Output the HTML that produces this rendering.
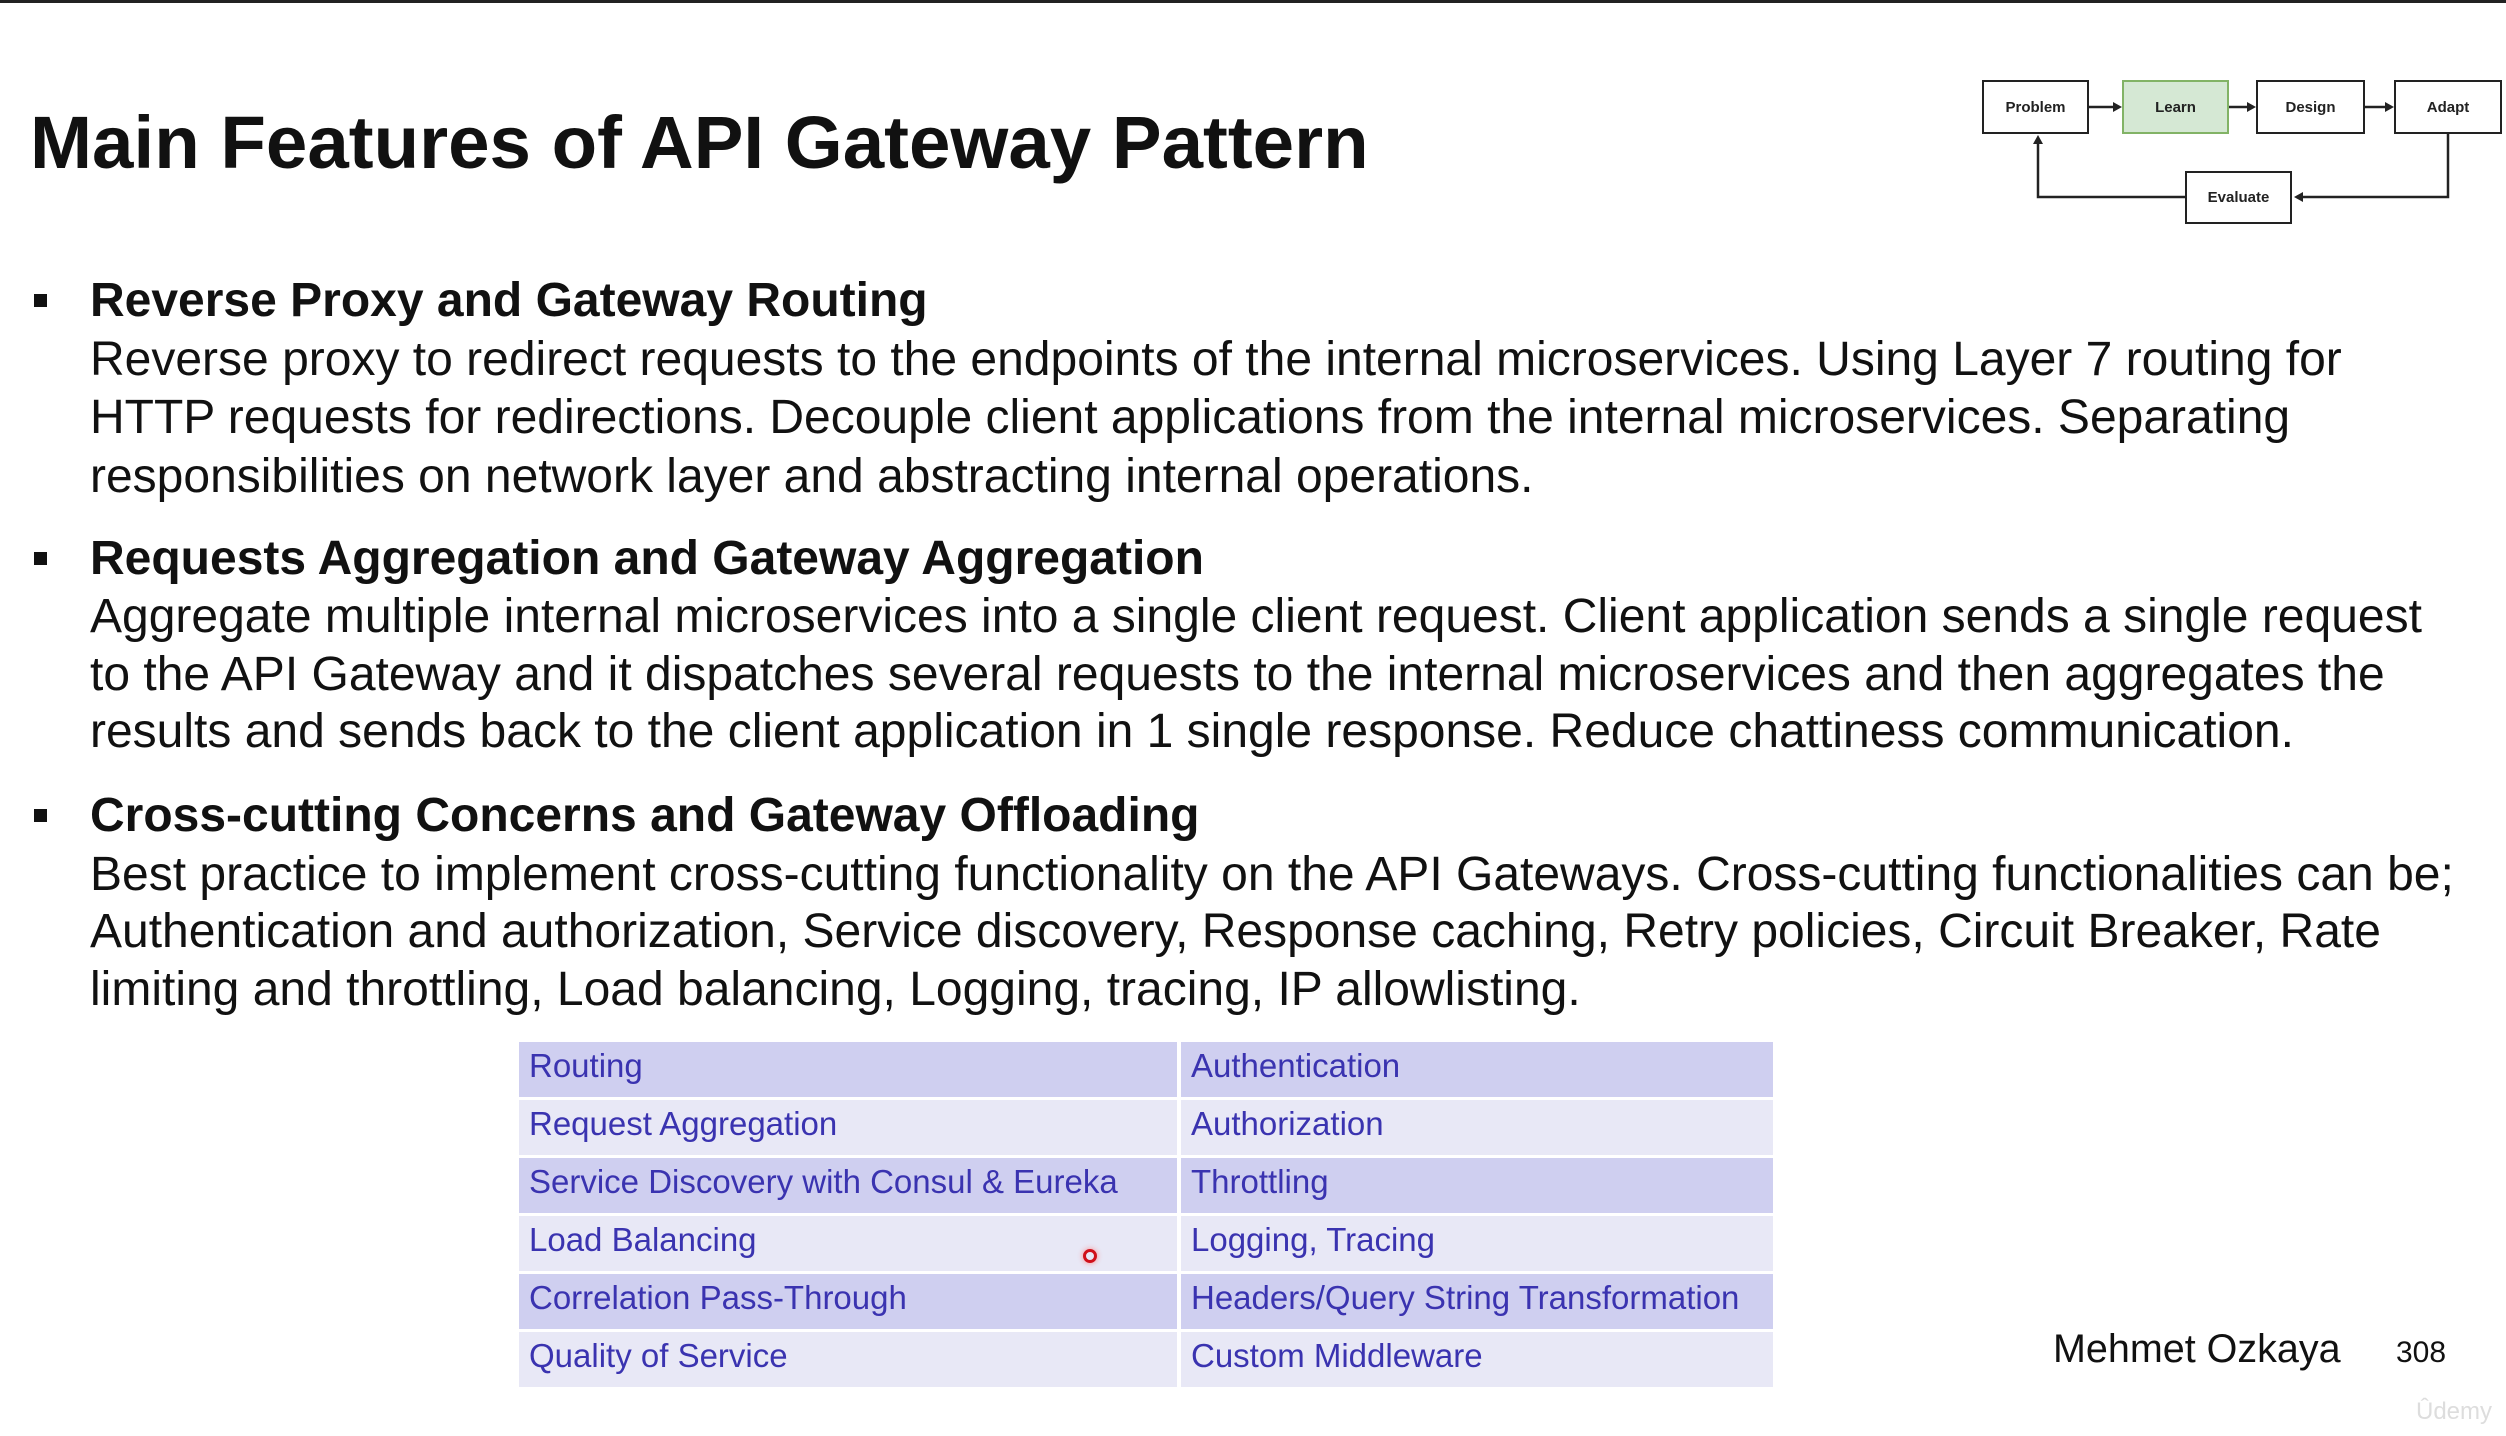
<!DOCTYPE html>
<html><head><meta charset="utf-8"><style>
*{margin:0;padding:0;box-sizing:border-box}
body{width:2506px;height:1436px;background:#fff;position:relative;overflow:hidden;font-family:"Liberation Sans",Arial,sans-serif;color:#111}
.a{position:absolute;white-space:nowrap}
.title{left:30px;top:106px;font-size:74.5px;font-weight:bold;line-height:1}
.h{left:90px;font-size:48px;font-weight:bold;line-height:1}
.t{left:90px;font-size:48px;line-height:1}
.b{left:34px;width:13px;height:13px;background:#111}
.tbl{left:519px;top:1042px;width:1254px}
.row{position:absolute;left:0;width:1254px;height:55px}
.c{position:absolute;top:0;height:55px;font-family:"Liberation Sans Narrow","Liberation Sans",sans-serif;font-size:33px;color:#3a33b0;line-height:48px;padding-left:10px}
.c1{left:0;width:658px}.c2{left:662px;width:592px}
.o .c{background:#cfcff0}.e .c{background:#e8e8f6}
.bx{position:absolute;border:2.5px solid #222;background:#fff;font-size:15px;font-weight:bold;display:flex;align-items:center;justify-content:center;color:#222}
</style></head><body>
<div class="a" style="left:0;top:0;width:2506px;height:3px;background:#222"></div>
<div class="a title">Main Features of API Gateway Pattern</div>

<div class="a b" style="top:294px"></div>
<div class="a h" style="top:277px">Reverse Proxy and Gateway Routing</div>
<div class="a t" style="top:336px">Reverse proxy to redirect requests to the endpoints of the internal microservices. Using Layer 7 routing for</div>
<div class="a t" style="top:394px">HTTP requests for redirections. Decouple client applications from the internal microservices. Separating</div>
<div class="a t" style="top:453px">responsibilities on network layer and abstracting internal operations.</div>

<div class="a b" style="top:552px"></div>
<div class="a h" style="top:535px">Requests Aggregation and Gateway Aggregation</div>
<div class="a t" style="top:593px">Aggregate multiple internal microservices into a single client request. Client application sends a single request</div>
<div class="a t" style="top:651px">to the API Gateway and it dispatches several requests to the internal microservices and then aggregates the</div>
<div class="a t" style="top:708px">results and sends back to the client application in 1 single response. Reduce chattiness communication.</div>

<div class="a b" style="top:809px"></div>
<div class="a h" style="top:792px">Cross-cutting Concerns and Gateway Offloading</div>
<div class="a t" style="top:851px">Best practice to implement cross-cutting functionality on the API Gateways. Cross-cutting functionalities can be;</div>
<div class="a t" style="top:908px">Authentication and authorization, Service discovery, Response caching, Retry policies, Circuit Breaker, Rate</div>
<div class="a t" style="top:966px">limiting and throttling, Load balancing, Logging, tracing, IP allowlisting.</div>

<div class="a tbl">
<div class="row o" style="top:0"><div class="c c1">Routing</div><div class="c c2">Authentication</div></div>
<div class="row e" style="top:58px"><div class="c c1">Request Aggregation</div><div class="c c2">Authorization</div></div>
<div class="row o" style="top:116px"><div class="c c1">Service Discovery with Consul &amp; Eureka</div><div class="c c2">Throttling</div></div>
<div class="row e" style="top:174px"><div class="c c1">Load Balancing</div><div class="c c2">Logging, Tracing</div></div>
<div class="row o" style="top:232px"><div class="c c1">Correlation Pass-Through</div><div class="c c2">Headers/Query String Transformation</div></div>
<div class="row e" style="top:290px"><div class="c c1">Quality of Service</div><div class="c c2">Custom Middleware</div></div>
</div>
<div class="a" style="left:1083px;top:1249px;width:14px;height:14px;border-radius:50%;border:3px solid #d0101a;box-shadow:0 0 6px #f88"></div>

<svg class="a" style="left:1970px;top:70px" width="536" height="170">
<g stroke="#222" stroke-width="2.5" fill="none">
<line x1="119" y1="37" x2="146" y2="37"/><line x1="259" y1="37" x2="280" y2="37"/><line x1="395" y1="37" x2="418" y2="37"/>
<polyline points="478,64 478,127 330,127"/><polyline points="215,127 68,127 68,72"/>
</g>
<g fill="#222"><path d="M152 37l-9-5v10z"/><path d="M286 37l-9-5v10z"/><path d="M424 37l-9-5v10z"/><path d="M324 127l9-5v10z"/><path d="M68 65l-5 9h10z"/></g>
</svg>
<div class="bx" style="left:1982px;top:80px;width:107px;height:54px">Problem</div>
<div class="bx" style="left:2122px;top:80px;width:107px;height:54px;background:#d5e8d4;border-color:#82b366">Learn</div>
<div class="bx" style="left:2256px;top:80px;width:109px;height:54px">Design</div>
<div class="bx" style="left:2394px;top:80px;width:108px;height:54px">Adapt</div>
<div class="bx" style="left:2185px;top:171px;width:107px;height:53px">Evaluate</div>

<div class="a" style="left:2053px;top:1327px;font-size:39.5px">Mehmet Ozkaya</div>
<div class="a" style="left:2396px;top:1336px;font-size:30px">308</div>
<div class="a" style="left:2416px;top:1398px;font-size:24px;color:#ddd">Ûdemy</div>
</body></html>
